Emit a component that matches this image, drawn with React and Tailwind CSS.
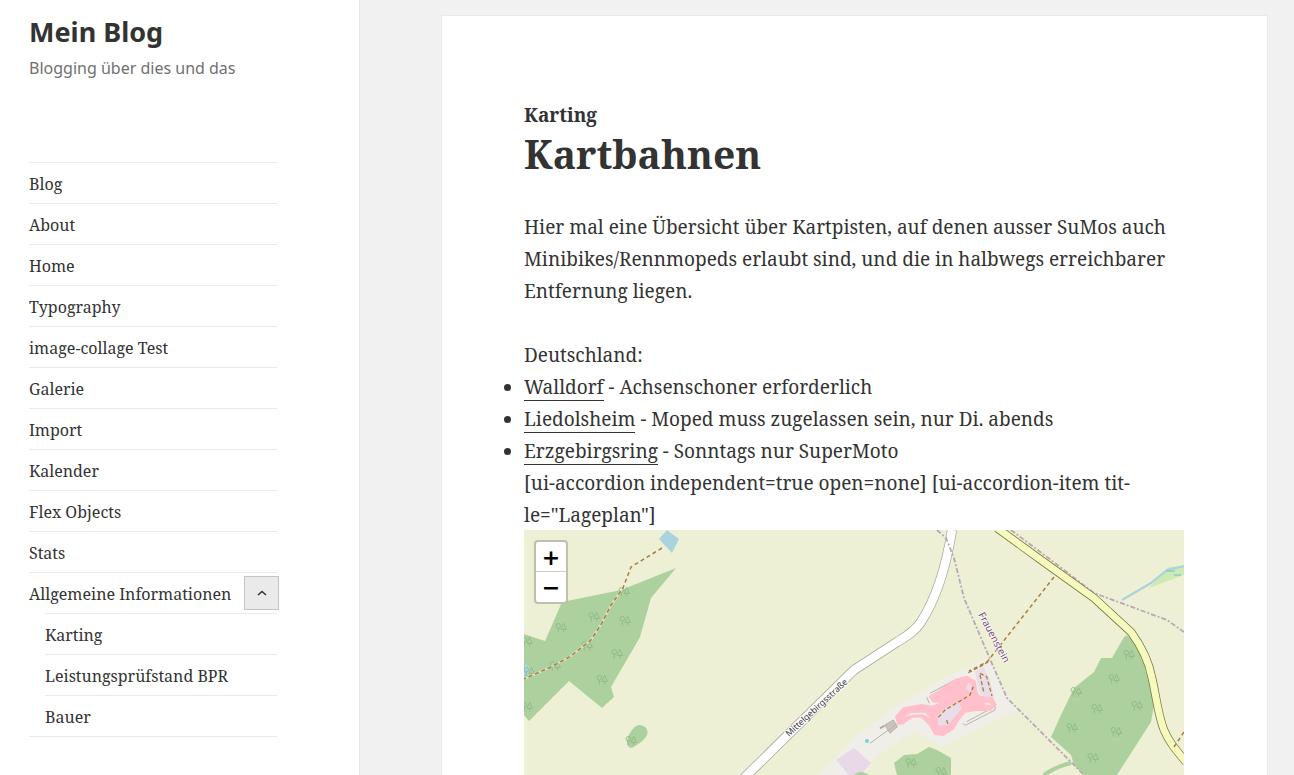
import React from "react";

const serif = "font-['Noto_Serif','Liberation_Serif',serif]";
const items = ["Blog","About","Home","Typography","image-collage Test","Galerie","Import","Kalender","Flex Objects","Stats"];
const subs = ["Karting","Leistungsprüfstand BPR","Bauer"];
const trees = [[70,87],[37,98],[101,91],[100,62],[63,116],[93,124],[78,150],[31,136],[3,112],[5,142],[3,177],[107,211],[605,125],[590,149],[552,162],[573,179],[613,176],[548,198],[592,202],[569,228],[387,233],[417,242]];
const road = "M218 250L330 140L373 112C385 105 392 100 397 92C408 75 420 50 428 0";
const yellow = "M473 -2L517 30L570 68L607 102C618 117 625 132 628 148C632 165 634 185 640 200C645 212 652 220 662 232";

function MapArt() {
  return (
    <svg className="block w-full h-full" viewBox="0 0 660 245" preserveAspectRatio="xMinYMin slice">
      <rect width="660" height="245" fill="#eef0d5" />
      <path d="M625 58L645 37L660 36V45Z" fill="#cdebb0" />
      <path d="M330 208L363 182L413 152L463 128L493 180L417 217L390 201L350 228L340 245H295Z" fill="#f0eee8" />
      <path d="M312 230L330 218L347 233L337 245H325Z" fill="#e8d8e8" />
      <path d="M152 38L127 68L116 107L87 157L90 167L78 178L45 151L5 191L0 185V104L21 111L38 72L97 60Z" fill="#add19e" />
      <path d="M115 195C122 195 125 201 123 205C120 211 113 215 108 218C103 218 102 212 104 207C106 202 110 196 115 195Z" fill="#add19e" />
      <path d="M600 107L588 128L577 128L570 142L550 158L537 185L527 207L547 225L550 235L560 245H593L627 192L631 170L627 140L611 112L603 105Z" fill="#add19e" />
      <path d="M370 233L380 225L393 224L405 217L413 220L427 228V245H373Z" fill="#add19e" />
      <path d="M330 245C335 240 340 242 345 245Z" fill="#add19e" />
      <path d="M520 245C530 238 538 235 547 233" stroke="#add19e" strokeWidth="4" fill="none" />
      <path d="M143 0L155 9L148 23L135 9Z" fill="#aad3df" />
      <circle cx="0" cy="140" r="6" fill="#aad3df" />
      <path d="M598 70L627 53L643 40L660 36" stroke="#aad3df" strokeWidth="2.2" fill="none" />
      <path d="M642 41H651M650 45H657" stroke="#6cb8e8" strokeWidth="1" fill="none" />
      {trees.map(([x, y], i) => (
        <g key={i} transform={`translate(${x} ${y})`} stroke="#8cb585" strokeWidth="0.8" fill="none">
          <circle cx="-2.7" cy="-2.2" r="2.3" />
          <path d="M-2.7 0V4.6" />
          <path d="M2.7 -4.6L5.4 1.4H0ZM2.7 1.4V4.6" />
        </g>
      ))}
      <path d={road} stroke="#a8a8a0" strokeWidth="10" fill="none" />
      <path d={road} stroke="#ffffff" strokeWidth="8.5" fill="none" />
      <path d="M413 0L422 8L430 28L440 68L463 122L483 168L523 208L560 245" stroke="#b9a6b6" strokeWidth="1.8" strokeDasharray="5 2 2 2" fill="none" />
      <path d="M487 0L523 27L570 63L643 90L660 102" stroke="#b9a6b6" strokeWidth="1.8" strokeDasharray="5 2 2 2" fill="none" />
      <path d={yellow} stroke="#77773a" strokeWidth="8.5" fill="none" />
      <path d={yellow} stroke="#f7fabf" strokeWidth="7" fill="none" />
      <path d="M138 18L107 37L99 58L87 75L78 93L67 110L47 126L27 137L0 149" stroke="#f4f0e4" strokeWidth="2.5" fill="none" opacity="0.5" />
      <path d="M138 18L107 37L99 58L87 75L78 93L67 110L47 126L27 137L0 149" stroke="#ac7d36" strokeWidth="1.5" strokeDasharray="4 3" fill="none" />
      <path d="M530 47L463 132L445 141M650 217L660 202" stroke="#ac7d36" strokeWidth="1.5" strokeDasharray="4 3" fill="none" />
      <g transform="translate(356 130) scale(0.3333)" fill="none">
        <path d="M285 35L310 20L330 60L345 130L320 115L300 100Z" fill="#e8dde8" />
        <path d="M150 100L225 60M140 112L148 130M248 190L256 196L345 150L346 135M260 185L335 145" stroke="#b5b5ad" strokeWidth="3" />
        <path d="M150 110L175 95L225 60L260 50L285 65L290 100L300 110L335 115L347 135L330 150L290 150L255 155L235 180L220 205L190 225L165 222L150 195L125 170L95 170L70 190L55 192L48 170L70 145L125 135L160 140L190 125L160 125Z" fill="#ffc0cb" stroke="#ffc0cb" strokeWidth="6" strokeLinejoin="round" />
        <path d="M172 168L200 142L235 125L245 145L225 170L205 195L175 197Z" fill="#e8dde8" />
        <path d="M265 68L274 72L272 100L258 85Z" fill="#e8dde8" />
        <path d="M72 172L95 159L135 158L150 174L128 163L96 164Z" fill="#f0eee8" />
        <path d="M312 128L328 128L332 136L318 134Z" fill="#f0eee8" />
        <path d="M265 38L300 20L325 5M300 40L320 50L336 108M300 45L312 100M175 172L195 150L270 105L280 80M200 180L205 197" stroke="#ac7d36" strokeWidth="4" strokeDasharray="12 7" />
        <path d="M15 195L40 180L52 200L30 220Z" fill="#cbc2b9" stroke="#a89e96" strokeWidth="2" />
        <path d="M0 205L14 197" stroke="#b5aaa0" strokeWidth="6" />
        <path d="M50 192L-30 250" stroke="#b5b5ad" strokeWidth="3" />
      </g>
      <circle cx="343" cy="211" r="2" fill="#7fcbe0" />
      <text transform="translate(265 207) rotate(-42.5)" fontSize="8.7" fontFamily="'Noto Sans',sans-serif" fill="#333" stroke="#fff" strokeWidth="2" paintOrder="stroke">Mittelgebirgsstraße</text>
      <text transform="translate(454 84.5) rotate(62)" fontSize="10" fontFamily="'Noto Sans',sans-serif" fill="#734a73" stroke="#fff" strokeWidth="1.2" paintOrder="stroke">Frauenstein</text>
    </svg>
  );
}

const A = ({ children }) => <a className="border-b border-[#333333]">{children}</a>;

export default function App() {
  return (
    <div className={`flex h-[775px] overflow-hidden bg-[#f1f1f1] text-[#333333] ${serif}`}>
      <aside className="w-[360px] shrink-0 h-full bg-white border-r border-[#e5e5e5] pl-[29px] pr-[82px]">
        <h1 className="mt-[14px] font-['Noto_Sans',sans-serif] font-bold text-[27px] leading-[36px]">Mein Blog</h1>
        <p className="mt-[5px] font-['Noto_Sans',sans-serif] text-[16px] leading-[26px] text-[#707070]">Blogging über dies und das</p>
        <nav className="mt-[81px] text-[16px] leading-[24px]">
          {items.map((t) => (
            <div key={t} className="border-t border-[#eaeaea] pt-[9px] pb-[7px]">{t}</div>
          ))}
          <div className="relative border-t border-[#eaeaea] pt-[9px] pb-[7px]">
            Allgemeine Informationen
            <button className="absolute right-[-2px] top-[3px] w-[35px] h-[34px] bg-[#eaeaea] border border-[#c4c4c4] flex items-center justify-center">
              <svg width="10" height="6" viewBox="0 0 10 6" fill="none" stroke="#333" strokeWidth="1.5"><path d="M1 5L5 1.5L9 5" /></svg>
            </button>
          </div>
          <div className="pl-[16px]">
            {subs.map((t) => (
              <div key={t} className="border-t border-[#eaeaea] pt-[9px] pb-[7px]">{t}</div>
            ))}
          </div>
          <div className="border-t border-[#eaeaea]" />
        </nav>
      </aside>
      <main className="flex-1 min-w-0 pl-[82px] pr-[27px] pt-[16px]">
        <article className="bg-white shadow-[0_0_0_1px_#e9e9e9] h-[900px] pl-[82px] pr-[83px] pt-[85px]">
          <div className="font-bold text-[19px] leading-[28px]">Karting</div>
          <h2 className="font-bold text-[39px] leading-[52px] mt-[-1px]">Kartbahnen</h2>
          <div className="mt-[31px] text-[19px] leading-[32px]">
            <p>Hier mal eine Übersicht über Kartpisten, auf denen ausser SuMos auch<br />Minibikes/Rennmopeds erlaubt sind, und die in halbwegs erreichbarer<br />Entfernung liegen.</p>
            <p className="mt-[32px]">Deutschland:</p>
            <ul className="list-disc">
              <li><A>Walldorf</A> - Achsenschoner erforderlich</li>
              <li><A>Liedolsheim</A> - Moped muss zugelassen sein, nur Di. abends</li>
              <li><A>Erzgebirgsring</A> - Sonntags nur SuperMoto</li>
            </ul>
            <p>[ui-accordion independent=true open=none] [ui-accordion-item tit-<br />le="Lageplan"]</p>
          </div>
          <div className="relative h-[400px] overflow-hidden mt-[-1px]">
            <div className="h-[245px]"><MapArt /></div>
            <div className="absolute left-[10px] top-[10px] w-[34px] border-2 border-[#bfbfae] rounded-[4px] bg-white font-['DejaVu_Sans',sans-serif] font-bold text-[#000] text-center">
              <div className="h-[30px] text-[22px] leading-[32px] border-b border-[#cccccc]">+</div>
              <div className="h-[30px] text-[22px] leading-[31px]">−</div>
            </div>
          </div>
        </article>
      </main>
    </div>
  );
}
